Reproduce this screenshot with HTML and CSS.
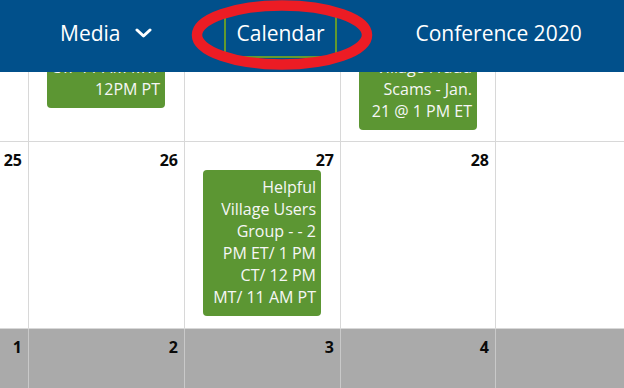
FILE: index.html
```html
<html>
<head>
	<title>Calendar</title>
	<link rel="stylesheet" href="styles.css">
</head>
<body>
	<header class="topbar">
		<nav class="menu">
			<a class="menu-item has-sub">Media
				<svg class="chev" width="17" height="10" viewBox="0 0 17 10"><polyline points="2,2 8.5,8 15,2" fill="none" stroke="#fff" stroke-width="3" stroke-linecap="round" stroke-linejoin="round"/></svg>
			</a>
			<a class="menu-item current">Calendar</a>
			<a class="menu-item">Conference 2020</a>
		</nav>
		<svg class="mark" width="192" height="72" viewBox="0 0 192 72"><ellipse cx="96" cy="35" rx="85" ry="29.5" fill="none" stroke="#ec1c24" stroke-width="10.5"/></svg>
	</header>

	<main class="month">
		<!-- week 1 (scrolled under the header) -->
		<div class="day"><span class="num"></span></div>
		<div class="day"><span class="num"></span>
			<div class="event">Online Class - 2<br>CT/ 11 AM MT/<br>12PM PT</div>
		</div>
		<div class="day"><span class="num"></span></div>
		<div class="day"><span class="num"></span>
			<div class="event">Webinar: Avoid<br>Village Fraud<br>Scams - Jan.<br>21 @ 1 PM ET</div>
		</div>
		<div class="day"><span class="num"></span></div>

		<!-- week 2 -->
		<div class="day"><span class="num">25</span></div>
		<div class="day"><span class="num">26</span></div>
		<div class="day"><span class="num">27</span>
			<div class="event">Helpful<br>Village Users<br>Group - - 2<br>PM ET/ 1 PM<br>CT/ 12 PM<br>MT/ 11 AM PT</div>
		</div>
		<div class="day"><span class="num">28</span></div>
		<div class="day"><span class="num"></span></div>

		<!-- next month -->
		<div class="day other"><span class="num">1</span></div>
		<div class="day other"><span class="num">2</span></div>
		<div class="day other"><span class="num">3</span></div>
		<div class="day other"><span class="num">4</span></div>
		<div class="day other"><span class="num"></span></div>
	</main>
</body>
</html>
```

FILE: styles.css
```css
* {
	box-sizing: border-box;
}

body {
	margin: 0;
	background: #fff;
	font-family: "Open Sans", "Noto Sans", sans-serif;
	overflow: hidden;
}

.topbar {
	position: fixed;
	top: 0;
	left: 0;
	right: 0;
	height: 72px;
	background: #01508b;
	z-index: 2;
}

.menu {
	display: flex;
	align-items: flex-start;
	padding: 10px 0 0 60px;
	white-space: nowrap;
}

.menu-item {
	color: #fff;
	font-size: 21px;
	line-height: 46px;
	text-decoration: none;
}

.has-sub {
	display: flex;
	align-items: center;
}

.chev {
	margin-left: 14px;
}

.current {
	margin-left: 72px;
	padding: 0 11px;
	border: 2px solid #629a2e;
	border-top: 0;
}

.current + .menu-item {
	margin-left: 78px;
}

.mark {
	position: absolute;
	left: 186px;
	top: 0;
}

.month {
	display: grid;
	grid-template-columns: 156px 156px 156px 155px 156px;
	grid-template-rows: 142px 187px 80px;
	margin-left: -127px;
}

.day {
	border-right: 1px solid #d8d8d8;
	border-bottom: 1px solid #d8d8d8;
}

.num {
	display: block;
	height: 28px;
	padding: 8px 6px 0 0;
	text-align: right;
	font-size: 16px;
	font-weight: bold;
	line-height: 20px;
	color: #0a0a0a;
}

.event {
	width: 118px;
	margin-left: 18px;
	padding: 6px 5px 8px 2px;
	background: #5c9633;
	border-radius: 4px;
	color: #f6f6f6;
	font-size: 16px;
	line-height: 22px;
	text-align: right;
	white-space: nowrap;
}

.other {
	background: #aaaaaa;
	border-right-color: #c9c9c9;
	border-bottom: 0;
}
```
